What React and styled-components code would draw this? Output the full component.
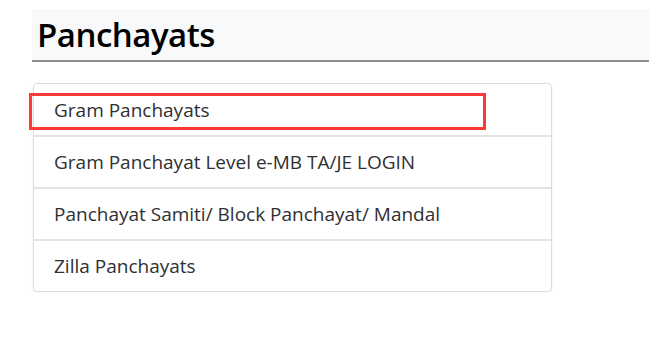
import React from "react";
import styled, { createGlobalStyle } from "styled-components";

const GlobalStyle = createGlobalStyle`
  body {
    margin: 0;
    background: #ffffff;
    font-family: "Open Sans", "Liberation Sans", sans-serif;
  }
`;

const Page = styled.div`
  padding: 9px 0 0 32px;
`;

const TitleBar = styled.div`
  height: 51px;
  background: #f8f9fa;
  border-bottom: 2px solid #8c8c8c;
  display: flex;
  align-items: center;
  padding-left: 5px;
`;

const Title = styled.h1`
  margin: 0;
  font-size: 33px;
  font-weight: 600;
  color: #000;
  letter-spacing: -0.5px;
`;

const List = styled.ul`
  list-style: none;
  margin: 21px 0 0 1px;
  padding: 0;
  width: 517px;
  border: 1px solid #dcdcdc;
  border-radius: 4px;
  box-shadow: 0 1px 2px rgba(0, 0, 0, 0.08);
`;

const Item = styled.li`
  position: relative;
  box-sizing: border-box;
  height: 51px;
  display: flex;
  align-items: center;
  padding: 0 20px;
  font-size: 19px;
  color: #2f2f33;
  & + & {
    height: 52px;
    border-top: 2px solid #e3e3e3;
  }
`;

const Highlight = styled.span`
  position: absolute;
  left: -5px;
  top: 9px;
  width: 451px;
  height: 31px;
  border: 3px solid #ff3838;
  pointer-events: none;
`;

const items = [
  "Gram Panchayats",
  "Gram Panchayat Level e-MB TA/JE LOGIN",
  "Panchayat Samiti/ Block Panchayat/ Mandal",
  "Zilla Panchayats",
];

const App = () => (
  <>
    <GlobalStyle />
    <Page>
      <TitleBar>
        <Title>Panchayats</Title>
      </TitleBar>
      <List>
        {items.map((label, i) => (
          <Item key={label}>
            {i === 0 && <Highlight />}
            {label}
          </Item>
        ))}
      </List>
    </Page>
  </>
);

export default App;
